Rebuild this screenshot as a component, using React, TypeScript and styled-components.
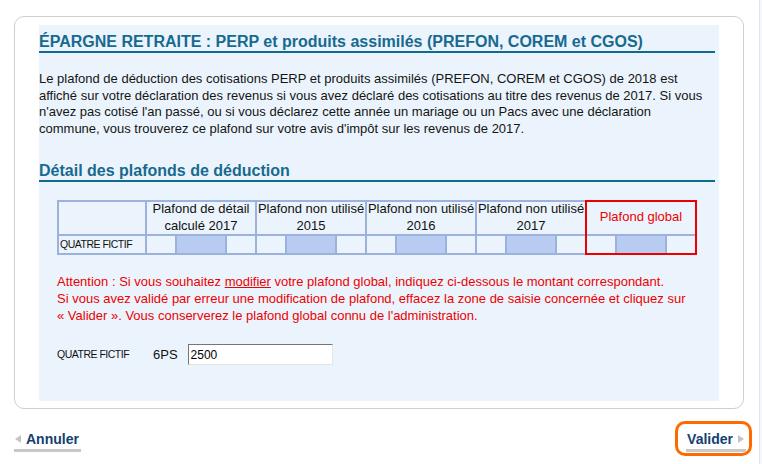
import React from "react";
import styled, { createGlobalStyle } from "styled-components";

const BLUE_LINE = "#9cb2dd";
const RED = "#ee0000";

const GlobalStyle = createGlobalStyle`
  html, body { margin: 0; padding: 0; background: #fff; }
  body {
    font-family: "Liberation Sans", Arial, sans-serif;
    font-size: 13px;
    color: #111;
  }
`;

const Page = styled.div`
  display: flex;
  height: 464px;
  overflow: hidden;
`;

const Main = styled.main`
  width: 759px;
  box-sizing: border-box;
  padding: 16px 0 0 14px;
`;

const Edge = styled.div`
  flex: 1;
  border-left: 1px solid #e3e6ea;
  background: #f4f8fc;
`;

const Card = styled.section`
  width: 730px;
  box-sizing: border-box;
  border: 1px solid #cfcfcf;
  border-radius: 10px;
  padding: 8px 24px 7px 24px;
`;

const Panel = styled.div`
  background: #ebf4fd;
  padding: 6.5px 4px 36px 0;
`;

const Title = styled.h1`
  margin: 0;
  font-size: 16px;
  font-weight: bold;
  line-height: 19px;
  color: #176a8f;
  border-bottom: 2px solid #0d6b8e;
  white-space: nowrap;
`;

const SubTitle = styled.h2`
  margin: 23px 0 0 0;
  font-size: 16px;
  font-weight: bold;
  line-height: 19px;
  color: #176a8f;
  border-bottom: 2px solid #0d6b8e;
`;

const Intro = styled.p`
  margin: 18.5px 9px 0 0;
  line-height: 16.67px;
  color: #141414;
`;

const Table = styled.div`
  display: flex;
  margin: 18px 0 0 18px;
`;

const Column = styled.div<{ $w: number; $sep?: boolean; $first?: boolean; $hl?: boolean }>`
  display: flex;
  flex-direction: column;
  width: ${(p) => p.$w}px;
  border-top: 2px solid ${(p) => (p.$hl ? RED : BLUE_LINE)};
  border-bottom: 2px solid ${(p) => (p.$hl ? RED : BLUE_LINE)};
  border-left: ${(p) => (p.$first ? `2px solid ${BLUE_LINE}` : p.$hl ? `2px solid ${RED}` : "none")};
  border-right: ${(p) => (p.$hl ? `2px solid ${RED}` : p.$sep ? `2px solid ${BLUE_LINE}` : "none")};
`;

const HeadCell = styled.div<{ $red?: boolean }>`
  height: 32px;
  border-bottom: 2px solid ${BLUE_LINE};
  display: flex;
  align-items: center;
  justify-content: center;
  text-align: center;
  line-height: 16.6px;
  color: ${(p) => (p.$red ? RED : "#111")};
`;

const DataRow = styled.div`
  display: flex;
  height: 17px;
`;

const SubCell = styled.div<{ $w: number; $fill?: boolean; $last?: boolean }>`
  width: ${(p) => p.$w}px;
  background: ${(p) => (p.$fill ? "#b8cbf0" : "transparent")};
  border-right: ${(p) => (p.$last ? "none" : `2px solid ${BLUE_LINE}`)};
`;

const RowLabel = styled.div`
  display: flex;
  align-items: center;
  height: 17px;
  padding-left: 1px;
  font-size: 10.5px;
  letter-spacing: -0.5px;
  color: #111;
  white-space: nowrap;
  overflow: hidden;
`;

const Warning = styled.p`
  margin: 19.5px 0 0 18px;
  line-height: 16.67px;
  color: ${RED};
`;

const Underlined = styled.span`
  text-decoration: underline;
`;

const InputRow = styled.div`
  display: flex;
  align-items: center;
  margin: 19.5px 0 0 18px;
  height: 21px;
`;

const FieldLabel = styled.span`
  width: 96px;
  font-size: 10.5px;
  letter-spacing: -0.5px;
  color: #111;
  white-space: nowrap;
`;

const Code = styled.span`
  margin-right: 10px;
  font-size: 13px;
  color: #111;
`;

const Amount = styled.input`
  width: 145px;
  height: 21px;
  box-sizing: border-box;
  margin: 0;
  padding: 1px 2px 0;
  border: 1px solid;
  border-color: #767676 #e4e4e4 #e4e4e4 #767676;
  background: #fff;
  font-family: "Liberation Sans", Arial, sans-serif;
  font-size: 12px;
  color: #000;
  outline: none;
`;

const Nav = styled.nav`
  display: flex;
  justify-content: space-between;
  align-items: flex-start;
  width: 738px;
  margin-top: 12px;
`;

const CancelWrap = styled.div`
  padding-top: 10px;
`;

const NavLink = styled.a`
  display: inline-flex;
  align-items: center;
  gap: 5px;
  padding: 0 2px 2px 1px;
  border-bottom: 3px solid #c8c8c8;
  font-size: 14px;
  font-weight: bold;
  line-height: 16px;
  color: #143f70;
  text-decoration: none;
  cursor: pointer;
`;

const Arrow = styled.span<{ $dir: "left" | "right" }>`
  width: 0;
  height: 0;
  border-top: 4.5px solid transparent;
  border-bottom: 4.5px solid transparent;
  ${(p) =>
    p.$dir === "left"
      ? "border-right: 6px solid #c4c4c4;"
      : "border-left: 6px solid #c4c4c4;"}
`;

const FocusRing = styled.div`
  border: 3px solid #ff6a00;
  border-radius: 10px;
  padding: 7px 3px 1px 8px;
`;

const groups = [
  { label: "Plafond de détail calculé 2017" },
  { label: "Plafond non utilisé 2015" },
  { label: "Plafond non utilisé 2016" },
  { label: "Plafond non utilisé 2017" },
];

const SubCells = () => (
  <DataRow>
    <SubCell $w={28} />
    <SubCell $w={48} $fill />
    <SubCell $w={28} $last />
  </DataRow>
);

export default function App() {
  return (
    <>
      <GlobalStyle />
      <Page>
        <Main>
          <Card>
            <Panel>
              <Title>ÉPARGNE RETRAITE : PERP et produits assimilés (PREFON, COREM et CGOS)</Title>
              <Intro>
                Le plafond de déduction des cotisations PERP et produits assimilés (PREFON, COREM et CGOS) de 2018 est
                affiché sur votre déclaration des revenus si vous avez déclaré des cotisations au titre des revenus de
                2017. Si vous n'avez pas cotisé l'an passé, ou si vous déclarez cette année un mariage ou un Pacs avec
                une déclaration commune, vous trouverez ce plafond sur votre avis d'impôt sur les revenus de 2017.
              </Intro>
              <SubTitle>Détail des plafonds de déduction</SubTitle>
              <Table>
                <Column $w={86} $first $sep>
                  <HeadCell />
                  <RowLabel>QUATRE FICTIF</RowLabel>
                </Column>
                {groups.map((g, i) => (
                  <Column key={g.label} $w={108} $sep={i < groups.length - 1}>
                    <HeadCell>{g.label}</HeadCell>
                    <SubCells />
                  </Column>
                ))}
                <Column $w={108} $hl>
                  <HeadCell $red>Plafond global</HeadCell>
                  <SubCells />
                </Column>
              </Table>
              <Warning>
                Attention : Si vous souhaitez <Underlined>modifier</Underlined> votre plafond global, indiquez
                ci-dessous le montant correspondant.
                <br />
                Si vous avez validé par erreur une modification de plafond, effacez la zone de saisie concernée et
                cliquez sur {"«\u00a0Valider\u00a0»."} Vous conserverez le plafond global connu de l'administration.
              </Warning>
              <InputRow>
                <FieldLabel>QUATRE FICTIF</FieldLabel>
                <Code>6PS</Code>
                <Amount defaultValue="2500" />
              </InputRow>
            </Panel>
          </Card>
          <Nav>
            <CancelWrap>
              <NavLink>
                <Arrow $dir="left" />
                Annuler
              </NavLink>
            </CancelWrap>
            <FocusRing>
              <NavLink>
                Valider
                <Arrow $dir="right" />
              </NavLink>
            </FocusRing>
          </Nav>
        </Main>
        <Edge />
      </Page>
    </>
  );
}
